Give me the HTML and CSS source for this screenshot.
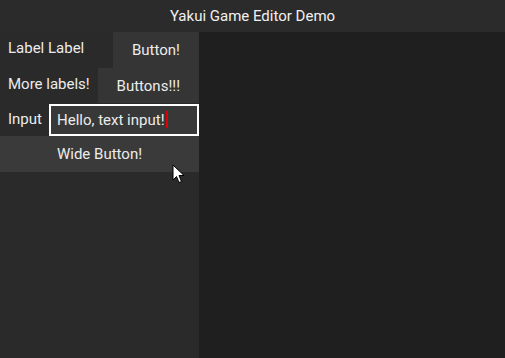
FILE: index.html
```html
<!DOCTYPE html>
<html lang="en">
<head>
    <meta charset="UTF-8">
    <title>Yakui Game Editor Demo</title>
    <link rel="stylesheet" href="styles.css">
</head>
<body>
    <div class="window">
        <!-- Title bar -->
        <div class="title-bar">Yakui Game Editor Demo</div>

        <div class="main">
            <!-- Left panel with widgets -->
            <div class="panel">
                <div class="row">
                    <span class="label">Label Label</span>
                    <span class="button">Button!</span>
                </div>
                <div class="row">
                    <span class="label">More labels!</span>
                    <span class="button">Buttons!!!</span>
                </div>
                <div class="row">
                    <span class="label">Input</span>
                    <span class="text-input">Hello, text input!<span class="caret"></span></span>
                </div>
                <div class="wide-button">Wide Button!</div>
            </div>

            <!-- Viewport -->
            <div class="viewport"></div>
        </div>

        <!-- Mouse pointer -->
        <svg class="pointer" width="14" height="21" viewBox="0 0 14 21">
            <path d="M1 1 L1 16 L4.5 12.5 L7 18.5 L9.5 17.5 L7 11.5 L12 11.5 Z" fill="#fff" stroke="#000" stroke-width="1"/>
        </svg>
    </div>
</body>
</html>
```

FILE: styles.css
```css
/* Page reset */
body {
    margin: 0;
    font-family: Roboto, "Liberation Sans", sans-serif;
    font-size: 15px;
    color: #ececec;
    background-color: #1f1f1f;
}

.window {
    position: relative;
    width: 505px;
    height: 358px;
    display: flex;
    flex-direction: column;
    overflow: hidden;
}

/* Title bar across the top */
.title-bar {
    height: 32px;
    line-height: 32px;
    text-align: center;
    background-color: #2b2b2b;
    color: #f0f0f0;
}

.main {
    flex: 1;
    display: flex;
}

/* Left widget panel */
.panel {
    width: 199px;
    background-color: #2a2a2a;
}

.row {
    display: flex;
    justify-content: space-between;
    align-items: flex-start;
    white-space: nowrap;
}

.label {
    padding: 8px 8px;
    line-height: 16px;
    min-width: 0;
}

.button {
    flex-shrink: 0;
    padding: 0 19px;
    height: 36px;
    line-height: 36px;
    background-color: #353535;
}

.row:nth-child(2) .button {
    height: 35px;
    line-height: 37px;
}

.text-input {
    flex-shrink: 0;
    width: 150px;
    height: 32px;
    box-sizing: border-box;
    border: 2px solid #ffffff;
    padding: 0 6px;
    line-height: 28px;
    background-color: #383838;
    margin-top: 1px;
}

.caret {
    display: inline-block;
    width: 2px;
    height: 17px;
    margin-left: 1px;
    vertical-align: -3px;
    background-color: #e00000;
}

.wide-button {
    height: 36px;
    line-height: 36px;
    text-align: center;
    background-color: #3a3a3a;
}

/* Right side viewport */
.viewport {
    flex: 1;
    background-color: #1f1f1f;
}

/* Mouse pointer overlay */
.pointer {
    position: absolute;
    left: 172px;
    top: 164px;
}
```
